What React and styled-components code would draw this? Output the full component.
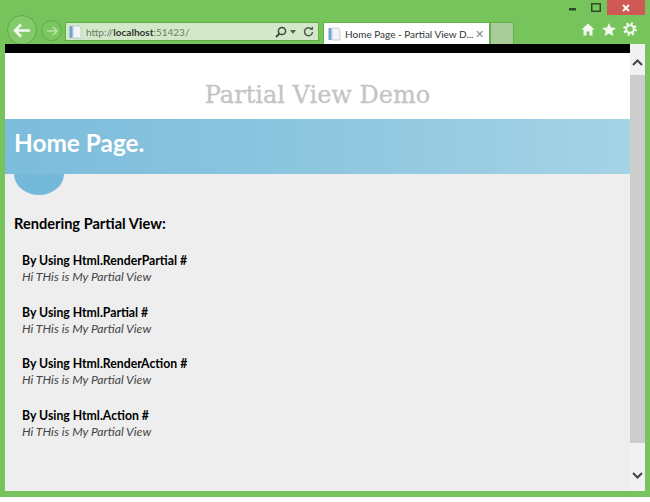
import React from 'react';
import styled, { createGlobalStyle } from 'styled-components';

const GlobalStyle = createGlobalStyle`
  html, body {
    margin: 0;
    padding: 0;
    background: #fff;
  }
  body {
    font-family: Lato, "Open Sans", "Liberation Sans", sans-serif;
  }
`;

const Screen = styled.div`
  width: 650px;
  height: 502px;
  overflow: hidden;
  display: flex;
  flex-direction: column;
`;

const BrowserWindow = styled.div`
  height: 497px;
  background: #78c45c;
  display: flex;
  flex-direction: column;
  box-sizing: border-box;
  padding-bottom: 6px;
`;

const TitleBar = styled.div`
  height: 15px;
  flex: none;
  display: flex;
  justify-content: flex-end;
  align-items: flex-start;
  padding-right: 5px;
`;

const WinButton = styled.div`
  width: ${p => p.$w}px;
  height: 15px;
  display: flex;
  align-items: center;
  justify-content: center;
  background: ${p => p.$bg || 'transparent'};
`;

const Toolbar = styled.div`
  height: 29px;
  flex: none;
  display: flex;
  align-items: flex-end;
  padding-left: 7px;
`;

const BackButton = styled.div`
  width: 30px;
  height: 30px;
  box-sizing: border-box;
  border: 1.5px solid #5cab45;
  border-radius: 50%;
  margin-bottom: -1px;
  flex: none;
  display: flex;
  align-items: center;
  justify-content: center;
  background: #84ca6b;
`;

const ForwardButton = styled(BackButton)`
  width: 21px;
  height: 21px;
  margin: 0 3px 3px 4px;
  background: #7cc661;
`;

const AddressBar = styled.div`
  width: 254px;
  height: 19px;
  margin-bottom: 3px;
  flex: none;
  box-sizing: border-box;
  border: 1px solid #5fae47;
  background: #d2e8c8;
  display: flex;
  align-items: center;
  padding: 0 3px;

  svg {
    flex: none;
  }
`;

const Url = styled.span`
  font-size: 10px;
  color: #6d7a68;
  margin-left: 4px;
  flex: 1;

  b {
    color: #2f352d;
    font-weight: 700;
  }
`;

const AddressTools = styled.div`
  display: flex;
  align-items: center;
  gap: 3px;
  margin-right: 1px;
`;

const Tab = styled.div`
  width: 167px;
  height: 22px;
  margin-left: 4px;
  flex: none;
  background: #fff;
  display: flex;
  align-items: center;
  padding: 0 5px 0 4px;
  box-sizing: border-box;
  border: 1px solid #62b049;
  border-bottom: 0;

  svg {
    flex: none;
  }
`;

const TabTitle = styled.span`
  flex: 1;
  min-width: 0;
  font-size: 10px;
  color: #333;
  margin-left: 4px;
  white-space: nowrap;
`;

const TabClose = styled.span`
  font-size: 11px;
  line-height: 1;
  color: #8a8a8a;
  flex: none;
`;

const NewTab = styled.div`
  width: 24px;
  height: 22px;
  flex: none;
  background: #a9cc9a;
  box-sizing: border-box;
  border: 1px solid #62b049;
  border-bottom: 0;
`;

const RightTools = styled.div`
  margin-left: auto;
  display: flex;
  align-items: center;
  gap: 7px;
  padding-right: 13px;
  height: 28px;
  margin-bottom: 1px;
`;

const Body = styled.div`
  flex: 1;
  min-height: 0;
  display: flex;
  margin: 0 5px;
`;

const Page = styled.div`
  width: 625px;
  display: flex;
  flex-direction: column;
`;

const BlackBar = styled.div`
  height: 9px;
  flex: none;
  background: #000;
`;

const SiteHeader = styled.div`
  height: 66px;
  flex: none;
  background: #fff;
  display: flex;
  justify-content: center;
  padding-top: 27px;
  box-sizing: border-box;
`;

const SiteTitle = styled.h1`
  margin: 0;
  font-family: "DejaVu Serif", "Liberation Serif", serif;
  font-size: 24px;
  line-height: 30px;
  font-weight: 400;
  color: #c4c4c4;
  -webkit-text-stroke: 0.3px #c4c4c4;
`;

const Banner = styled.div`
  height: 55px;
  flex: none;
  background: linear-gradient(90deg, #7cbcdc 0%, #8dc6df 50%, #a5d3e6 100%);
  padding-left: 9px;
  box-sizing: border-box;
`;

const BannerTitle = styled.h2`
  margin: 0;
  font-size: 24.4px;
  line-height: 48px;
  font-weight: 700;
  color: #fff;
`;

const Content = styled.div`
  flex: 1;
  background: #eeeeee;
  padding-left: 9px;
`;

const Tongue = styled.div`
  width: 50px;
  height: 21px;
  background: #74b9da;
  border-radius: 0 0 25px 25px / 0 0 21px 21px;
`;

const SectionTitle = styled.h3`
  margin: 19px 0 19px;
  font-size: 14.6px;
  line-height: 20px;
  font-weight: 700;
  color: #000;
`;

const Demo = styled.div`
  margin: 0 0 19.5px 8px;
`;

const DemoTitle = styled.div`
  font-size: 12.25px;
  line-height: 16px;
  font-weight: 700;
  color: #000;
`;

const DemoText = styled.div`
  font-size: 12.2px;
  line-height: 16px;
  font-style: italic;
  color: #444;
`;

const Scrollbar = styled.div`
  width: 15px;
  flex: none;
  background: #f1f1f1;
  display: flex;
  flex-direction: column;
  align-items: center;
`;

const ArrowCell = styled.div`
  height: ${p => p.$h}px;
  padding-top: ${p => p.$top}px;
  box-sizing: border-box;
  flex: none;
  display: flex;
  align-items: center;
  justify-content: center;
`;

const Thumb = styled.div`
  width: 100%;
  height: 368px;
  flex: none;
  background: #cdcdcd;
`;

const Footer = styled.div`
  height: 5px;
  background: #fff;
`;

const PageIcon = () => (
  <svg width="13" height="14" viewBox="0 0 13 14">
    <rect x="0.5" y="1" width="3" height="12" fill="#6da6d8" />
    <path d="M4 1h6l2 2v10H4z" fill="#f2f4f6" stroke="#b5bdc6" strokeWidth="0.7" />
  </svg>
);

const Chevron = ({ up }) => (
  <svg width="11" height="7" viewBox="0 0 11 7">
    <path
      d={up ? 'M1 6l4.5-4.5L10 6' : 'M1 1l4.5 4.5L10 1'}
      fill="none"
      stroke="#444"
      strokeWidth="2"
    />
  </svg>
);

const demos = [
  'By Using Html.RenderPartial #',
  'By Using Html.Partial #',
  'By Using Html.RenderAction #',
  'By Using Html.Action #'
];

export default function App() {
  return (
    <Screen>
      <GlobalStyle />
      <BrowserWindow>
        <TitleBar>
          <WinButton $w={24}>
            <svg width="8" height="3" viewBox="0 0 8 3" style={{ marginTop: 4 }}>
              <rect width="7" height="2.5" fill="#2e4a28" />
            </svg>
          </WinButton>
          <WinButton $w={22}>
            <svg width="10" height="9" viewBox="0 0 10 9">
              <rect x="0.75" y="0.75" width="8.5" height="7.5" fill="none" stroke="#2e4a28" strokeWidth="1.5" />
            </svg>
          </WinButton>
          <WinButton $w={38} $bg="#cf5a55">
            <svg width="8" height="8" viewBox="0 0 8 8">
              <path d="M1 1l6 6M7 1L1 7" stroke="#fff" strokeWidth="1.8" />
            </svg>
          </WinButton>
        </TitleBar>
        <Toolbar>
          <BackButton>
            <svg width="18" height="15" viewBox="0 0 18 15">
              <path d="M8 1.5L2 7.5l6 6M2.5 7.5H17" fill="none" stroke="#f1f8ee" strokeWidth="2.6" />
            </svg>
          </BackButton>
          <ForwardButton>
            <svg width="12" height="10" viewBox="0 0 12 10">
              <path d="M7 1l4 4-4 4M10.5 5H1" fill="none" stroke="#b6e0a6" strokeWidth="1.6" />
            </svg>
          </ForwardButton>
          <AddressBar>
            <PageIcon />
            <Url>
              http://<b>localhost</b>:51423/
            </Url>
            <AddressTools>
              <svg width="12" height="12" viewBox="0 0 12 12">
                <circle cx="7" cy="5" r="3.6" fill="none" stroke="#39463a" strokeWidth="1.5" />
                <path d="M4.5 7.5L1 11" stroke="#39463a" strokeWidth="1.8" />
              </svg>
              <svg width="6" height="4" viewBox="0 0 6 4">
                <path d="M0 0h6L3 4z" fill="#55625a" />
              </svg>
              <svg width="11" height="11" viewBox="0 0 11 11" style={{ marginLeft: 4 }}>
                <path d="M8.8 3.4A4 4 0 1 0 9.5 6" fill="none" stroke="#4c5a4e" strokeWidth="1.5" />
                <path d="M6.5 3.8H10V0.5z" fill="#4c5a4e" />
              </svg>
            </AddressTools>
          </AddressBar>
          <Tab>
            <PageIcon />
            <TabTitle>Home Page - Partial View D...</TabTitle>
            <TabClose>✕</TabClose>
          </Tab>
          <NewTab />
          <RightTools>
            <svg width="14" height="13" viewBox="0 0 14 13">
              <path d="M7 0.5L0.5 6.5h2V12.5h3V8.5h3v4h3V6.5h2z" fill="#f2f8ef" />
            </svg>
            <svg width="14" height="13" viewBox="0 0 14 13">
              <path d="M7 0l2 4.5 5 .4-3.8 3.2 1.2 4.9L7 10.4 2.6 13l1.2-4.9L0 4.9l5-.4z" fill="#f2f8ef" />
            </svg>
            <svg width="14" height="14" viewBox="0 0 14 14">
              <circle cx="7" cy="7" r="3.8" fill="none" stroke="#f2f8ef" strokeWidth="2" />
              <circle cx="7" cy="7" r="5.6" fill="none" stroke="#f2f8ef" strokeWidth="2.4" strokeDasharray="2.2 2.2" />
            </svg>
          </RightTools>
        </Toolbar>
        <Body>
          <Page>
            <BlackBar />
            <SiteHeader>
              <SiteTitle>Partial View Demo</SiteTitle>
            </SiteHeader>
            <Banner>
              <BannerTitle>Home Page.</BannerTitle>
            </Banner>
            <Content>
              <Tongue />
              <SectionTitle>Rendering Partial View:</SectionTitle>
              {demos.map(title => (
                <Demo key={title}>
                  <DemoTitle>{title}</DemoTitle>
                  <DemoText>Hi THis is My Partial View</DemoText>
                </Demo>
              ))}
            </Content>
          </Page>
          <Scrollbar>
            <ArrowCell $h={31} $top={6}>
              <Chevron up />
            </ArrowCell>
            <Thumb />
            <ArrowCell $h={48} $top={16}>
              <Chevron />
            </ArrowCell>
          </Scrollbar>
        </Body>
      </BrowserWindow>
      <Footer />
    </Screen>
  );
}
